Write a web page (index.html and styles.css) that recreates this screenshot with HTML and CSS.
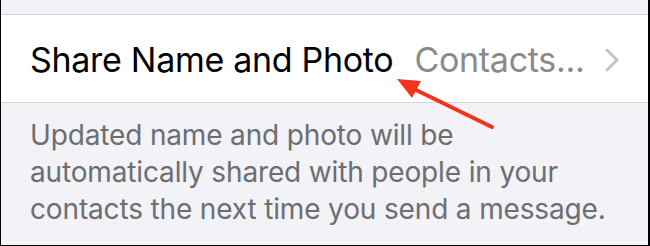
FILE: index.html
```html
<!DOCTYPE html>
<html>
<head>
<meta charset="utf-8">
<link rel="stylesheet" href="styles.css">
</head>
<body>
<div class="frame">
  <div class="band"></div>
  <div class="cell">
    <span class="title">Share Name and Photo</span>
    <span class="value">Contacts...</span>
    <svg class="chevron" width="14" height="24" viewBox="0 0 14 24"><path d="M2 2 L12 12 L2 22" fill="none" stroke="#c4c4c7" stroke-width="3" stroke-linecap="round" stroke-linejoin="round"/></svg>
  </div>
  <div class="footer">Updated name and photo will be automatically shared with people in your contacts the next time you send a message.</div>
  <svg class="arrow" width="650" height="246" viewBox="0 0 650 246">
    <line x1="492" y1="127" x2="410" y2="87" stroke="#f2341c" stroke-width="4" stroke-linecap="round"/>
    <polygon points="397,79 421,81 412,98" fill="#f2341c"/>
  </svg>
</div>
</body>
</html>
```
FILE: styles.css
```css
html, body {
  margin: 0;
  padding: 0;
  background: #f2f2f7;
}
.frame {
  position: relative;
  width: 650px;
  height: 246px;
  box-sizing: border-box;
  border-left: 1px solid #000;
  border-right: 2px solid #000;
  border-bottom: 1px solid #000;
  background: #f2f2f7;
  overflow: hidden;
  font-family: Inter, "Noto Sans", sans-serif;
}
.band {
  height: 14px;
  border-bottom: 1px solid #d3d3d8;
}
.cell {
  height: 88px;
  box-sizing: border-box;
  padding: 2px 29px 0 29px;
  background: #fff;
  border-bottom: 1px solid #d3d3d8;
  display: flex;
  align-items: center;
}
.title {
  font-size: 34px;
  color: #000;
  letter-spacing: -0.3px;
}
.value {
  font-size: 34px;
  color: #8a8a8e;
  margin-left: 21px;
  letter-spacing: -0.3px;
}
.chevron {
  margin-left: auto;
}
.footer {
  padding: 14px 30px 0 29px;
  font-size: 28px;
  line-height: 37px;
  color: #6d6d72;
  letter-spacing: -0.15px;
}
.arrow {
  position: absolute;
  left: -1px;
  top: 0;
}
```
